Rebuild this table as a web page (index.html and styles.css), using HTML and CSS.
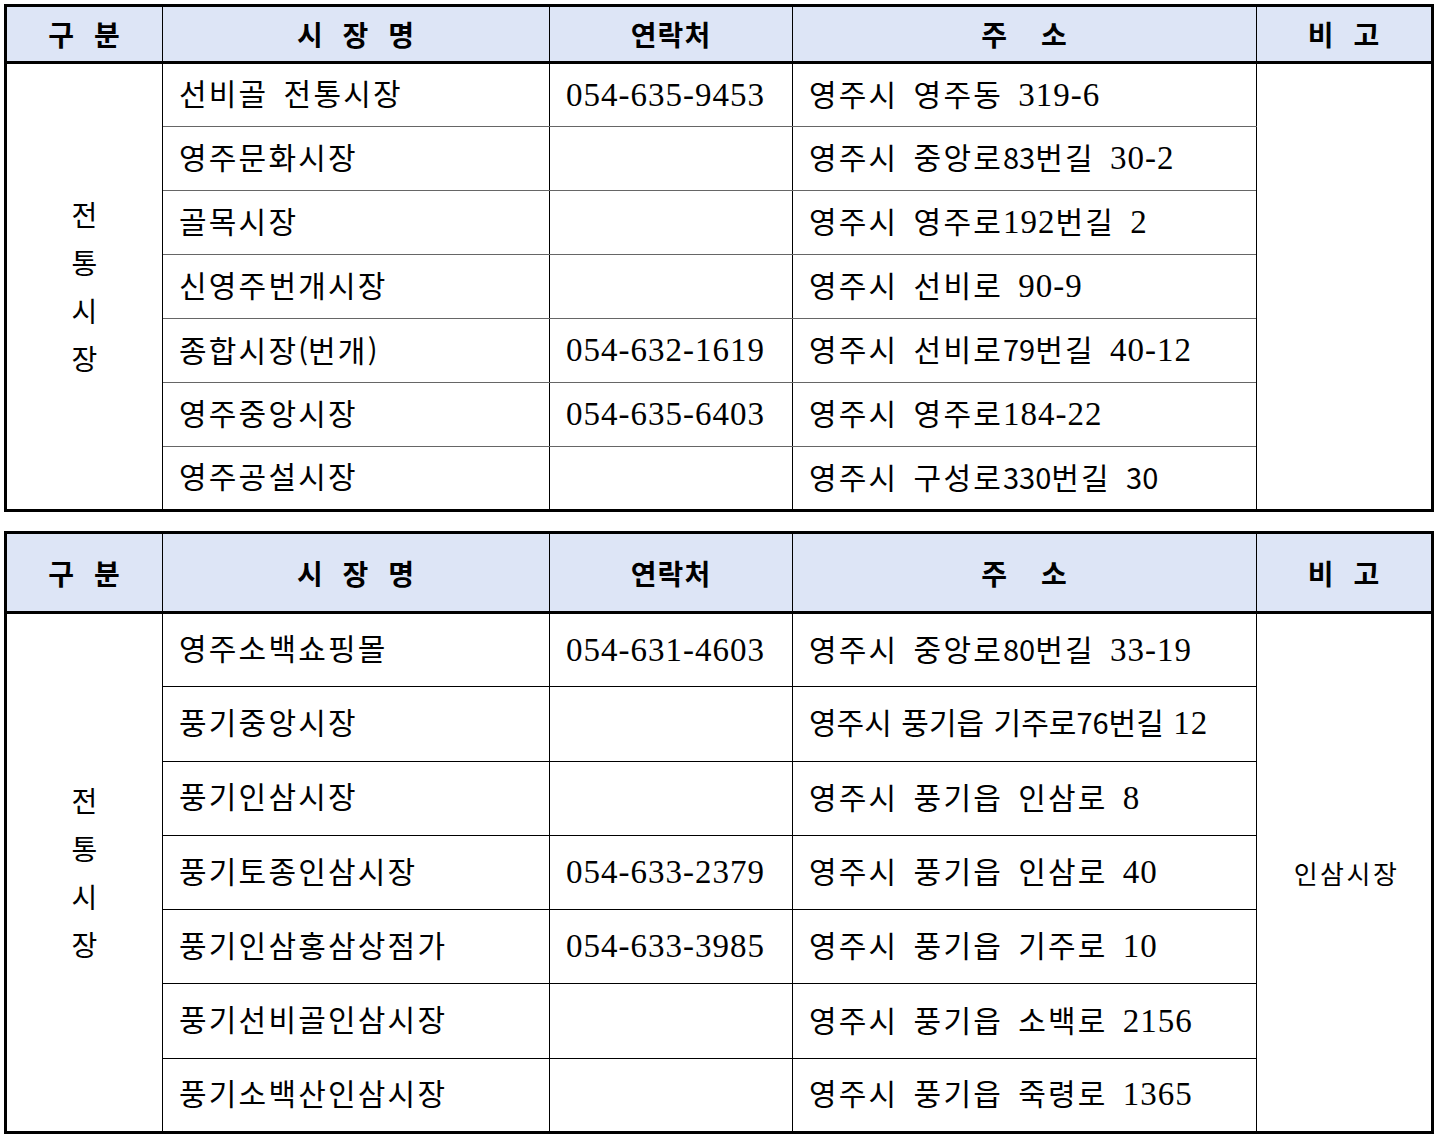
FILE: index.html
```html
<!DOCTYPE html>
<html lang="ko">
<head>
<meta charset="utf-8">
<title>영주 전통시장</title>
<link rel="stylesheet" href="styles.css">
</head>
<body>
<div class="page">
<table class="grid t1">
  <colgroup><col class="c1"><col class="c2"><col class="c3"><col class="c4"><col class="c5"></colgroup>
  <thead>
    <tr class="head">
      <th>구 분</th><th>시 장 명</th><th>연락처</th><th class="wide">주 소</th><th>비 고</th>
    </tr>
  </thead>
  <tbody>
    <tr>
      <td class="cat" rowspan="7">전<br>통<br>시<br>장</td>
      <td>선비골 전통시장</td><td><span class="n">054-635-9453</span></td><td>영주시 영주동 <span class="n">319-6</span></td>
      <td class="note" rowspan="7"></td>
    </tr>
    <tr><td>영주문화시장</td><td></td><td>영주시 중앙로<span class="g">83</span>번길 <span class="n">30-2</span></td></tr>
    <tr><td>골목시장</td><td></td><td>영주시 영주로<span class="n">192</span>번길 <span class="n">2</span></td></tr>
    <tr><td>신영주번개시장</td><td></td><td>영주시 선비로 <span class="n">90-9</span></td></tr>
    <tr><td>종합시장<span class="g">(</span>번개<span class="g">)</span></td><td><span class="n">054-632-1619</span></td><td>영주시 선비로<span class="g">79</span>번길 <span class="n">40-12</span></td></tr>
    <tr><td>영주중앙시장</td><td><span class="n">054-635-6403</span></td><td>영주시 영주로<span class="n">184-22</span></td></tr>
    <tr><td>영주공설시장</td><td></td><td>영주시 구성로<span class="g">330</span>번길 <span class="g">30</span></td></tr>
  </tbody>
</table>

<table class="grid t2">
  <colgroup><col class="c1"><col class="c2"><col class="c3"><col class="c4"><col class="c5"></colgroup>
  <thead>
    <tr class="head">
      <th>구 분</th><th>시 장 명</th><th>연락처</th><th class="wide">주 소</th><th>비 고</th>
    </tr>
  </thead>
  <tbody>
    <tr>
      <td class="cat" rowspan="7">전<br>통<br>시<br>장</td>
      <td>영주소백쇼핑몰</td><td><span class="n">054-631-4603</span></td><td>영주시 중앙로<span class="g">80</span>번길 <span class="n">33-19</span></td>
      <td class="note" rowspan="7">인삼시장</td>
    </tr>
    <tr><td>풍기중앙시장</td><td></td><td class="tight">영주시 풍기읍 기주로<span class="g">76</span>번길 <span class="n">12</span></td></tr>
    <tr><td>풍기인삼시장</td><td></td><td>영주시 풍기읍 인삼로 <span class="n">8</span></td></tr>
    <tr><td>풍기토종인삼시장</td><td><span class="n">054-633-2379</span></td><td>영주시 풍기읍 인삼로 <span class="n">40</span></td></tr>
    <tr><td>풍기인삼홍삼상점가</td><td><span class="n">054-633-3985</span></td><td>영주시 풍기읍 기주로 <span class="n">10</span></td></tr>
    <tr><td>풍기선비골인삼시장</td><td></td><td>영주시 풍기읍 소백로 <span class="n">2156</span></td></tr>
    <tr><td>풍기소백산인삼시장</td><td></td><td>영주시 풍기읍 죽령로 <span class="n">1365</span></td></tr>
  </tbody>
</table>
</div>
</body>
</html>
```

FILE: styles.css
```css
html, body {
  margin: 0;
  padding: 0;
  background: #ffffff;
}

.page {
  padding: 4px 0 0 4px;
  display: flex;
  flex-direction: column;
  gap: 19px;
}

.grid {
  border-collapse: collapse;
  table-layout: fixed;
  width: 1429px;
  border: 3px solid #000;
  font-family: "Liberation Serif", "Noto Sans CJK KR", serif;
  font-size: 30px;
  color: #000;
}

.c1 { width: 157px; }
.c2 { width: 387px; }
.c3 { width: 243px; }
.c4 { width: 464px; }
.c5 { width: 176px; }

.grid th {
  background: #dde5f6;
  font-family: "Noto Sans CJK KR", sans-serif;
  font-weight: 700;
  font-size: 28px;
  letter-spacing: 1px;
  word-spacing: 10px;
  text-align: center;
  border-left: 1px solid #000;
  border-right: 1px solid #000;
  border-bottom: 3px solid #000;
  padding: 0;
  line-height: 1;
}

.grid th.wide {
  word-spacing: 24px;
}

.grid td {
  border: 1px solid #000;
  padding: 0 0 0 16px;
  vertical-align: middle;
  letter-spacing: 2.2px;
  word-spacing: 5.5px;
  line-height: 1;
  white-space: nowrap;
}

.t1 td { border-top-color: #666; border-bottom-color: #666; }
.t1 td.cat, .t1 td.note { border-bottom-color: #000; }

.t1 .head { height: 57px; }
.t1 tbody tr { height: 64px; }
.t2 .head { height: 80px; }
.t2 tbody tr { height: 74.3px; }

.grid td.cat {
  padding: 0 0 2px 0;
  text-align: center;
  font-family: "Noto Sans CJK KR", sans-serif;
  font-size: 28px;
  line-height: 48px;
  letter-spacing: 0;
}

.grid td.note {
  padding: 0 0 0 5px;
  text-align: center;
  font-family: "Noto Sans CJK KR", sans-serif;
  font-size: 26px;
  letter-spacing: 2.5px;
}

.grid td.tight {
  letter-spacing: 0;
  word-spacing: 2px;
}

.n {
  font-size: 33px;
  letter-spacing: 1px;
  line-height: 1;
}

.g {
  font-family: "Noto Sans CJK KR", sans-serif;
  font-size: 29px;
  letter-spacing: 0;
}
```
